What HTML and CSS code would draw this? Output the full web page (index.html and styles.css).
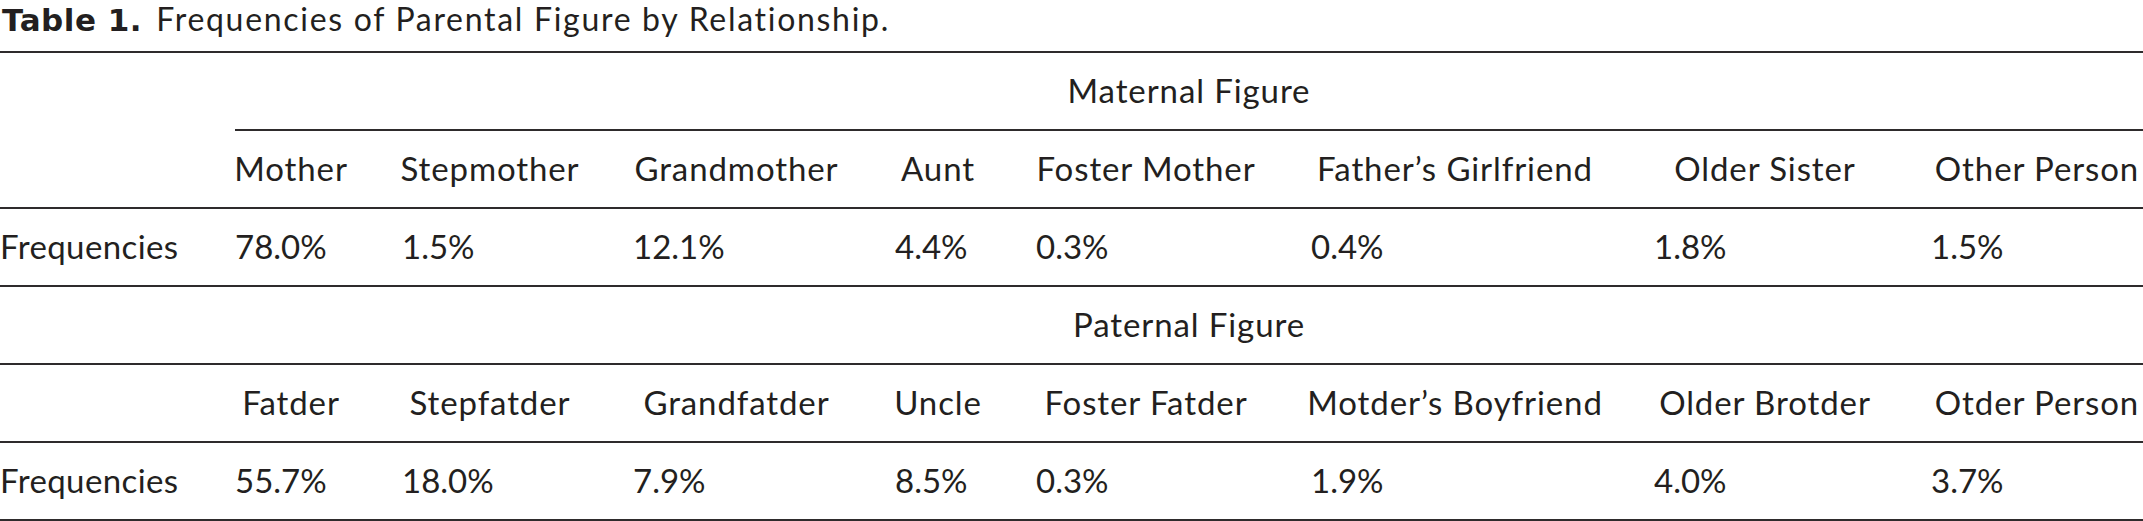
FILE: index.html
```html
<!DOCTYPE html>
<html lang="en">
<head>
<meta charset="utf-8">
<title>Table 1. Frequencies of Parental Figure by Relationship.</title>
<link rel="stylesheet" href="styles.css">
</head>
<body>
<div class="caption"><span class="caption-label">Table 1.</span> <span class="caption-text">Frequencies of Parental Figure by Relationship.</span></div>
<div class="table">
  <div class="row">
    <div class="cell"></div>
    <div class="cell span spanner-partial">Maternal Figure</div>
  </div>
  <div class="row ruled">
    <div class="cell"></div>
    <div class="cell head">Mother</div>
    <div class="cell head">Stepmother</div>
    <div class="cell head">Grandmother</div>
    <div class="cell head">Aunt</div>
    <div class="cell head">Foster Mother</div>
    <div class="cell head">Father’s Girlfriend</div>
    <div class="cell head">Older Sister</div>
    <div class="cell head">Other Person</div>
  </div>
  <div class="row ruled">
    <div class="cell label">Frequencies</div>
    <div class="cell num">78.0%</div>
    <div class="cell num">1.5%</div>
    <div class="cell num">12.1%</div>
    <div class="cell num">4.4%</div>
    <div class="cell num">0.3%</div>
    <div class="cell num">0.4%</div>
    <div class="cell num">1.8%</div>
    <div class="cell num">1.5%</div>
  </div>
  <div class="row ruled">
    <div class="cell"></div>
    <div class="cell span">Paternal Figure</div>
  </div>
  <div class="row ruled">
    <div class="cell"></div>
    <div class="cell head">Fatder</div>
    <div class="cell head">Stepfatder</div>
    <div class="cell head">Grandfatder</div>
    <div class="cell head">Uncle</div>
    <div class="cell head">Foster Fatder</div>
    <div class="cell head">Motder’s Boyfriend</div>
    <div class="cell head">Older Brotder</div>
    <div class="cell head">Otder Person</div>
  </div>
  <div class="row ruled">
    <div class="cell label">Frequencies</div>
    <div class="cell num">55.7%</div>
    <div class="cell num">18.0%</div>
    <div class="cell num">7.9%</div>
    <div class="cell num">8.5%</div>
    <div class="cell num">0.3%</div>
    <div class="cell num">1.9%</div>
    <div class="cell num">4.0%</div>
    <div class="cell num">3.7%</div>
  </div>
</div>
</body>
</html>
```

FILE: styles.css
```css
html, body {
  margin: 0;
  padding: 0;
  background: #ffffff;
}

body {
  font-family: Lato, "Open Sans", "Liberation Sans", sans-serif;
  font-size: 33px;
  color: #231f20;
  width: 2143px;
}

.caption {
  height: 51px;
  box-sizing: border-box;
  padding-left: 2px;
  font-size: 32px;
  line-height: 37px;
  white-space: nowrap;
}

.caption-label {
  font-family: "DejaVu Sans", Lato, sans-serif;
  font-weight: 700;
  font-size: 31px;
  letter-spacing: 0.5px;
  margin-right: 6px;
}

.caption-text {
  letter-spacing: 1.7px;
}

.table {
  border-top: 2px solid #2e2b2c;
}

.row {
  display: grid;
  grid-template-columns: 180px 112px 176px 207px 86px 220px 288px 222px 1fr;
  column-gap: 55px;
  height: 78px;
  box-sizing: border-box;
  align-items: stretch;
}

.row.ruled {
  border-bottom: 2px solid #2e2b2c;
}

.cell {
  display: flex;
  align-items: center;
  white-space: nowrap;
  line-height: 1.2;
  letter-spacing: 0.4px;
}

.cell.num {
  letter-spacing: 0;
}

.cell.head {
  justify-content: center;
  letter-spacing: 0.9px;
}

.cell.span {
  grid-column: 2 / -1;
  justify-content: center;
  letter-spacing: 0.9px;
}

.cell.spanner-partial {
  border-bottom: 2px solid #2e2b2c;
}
```
